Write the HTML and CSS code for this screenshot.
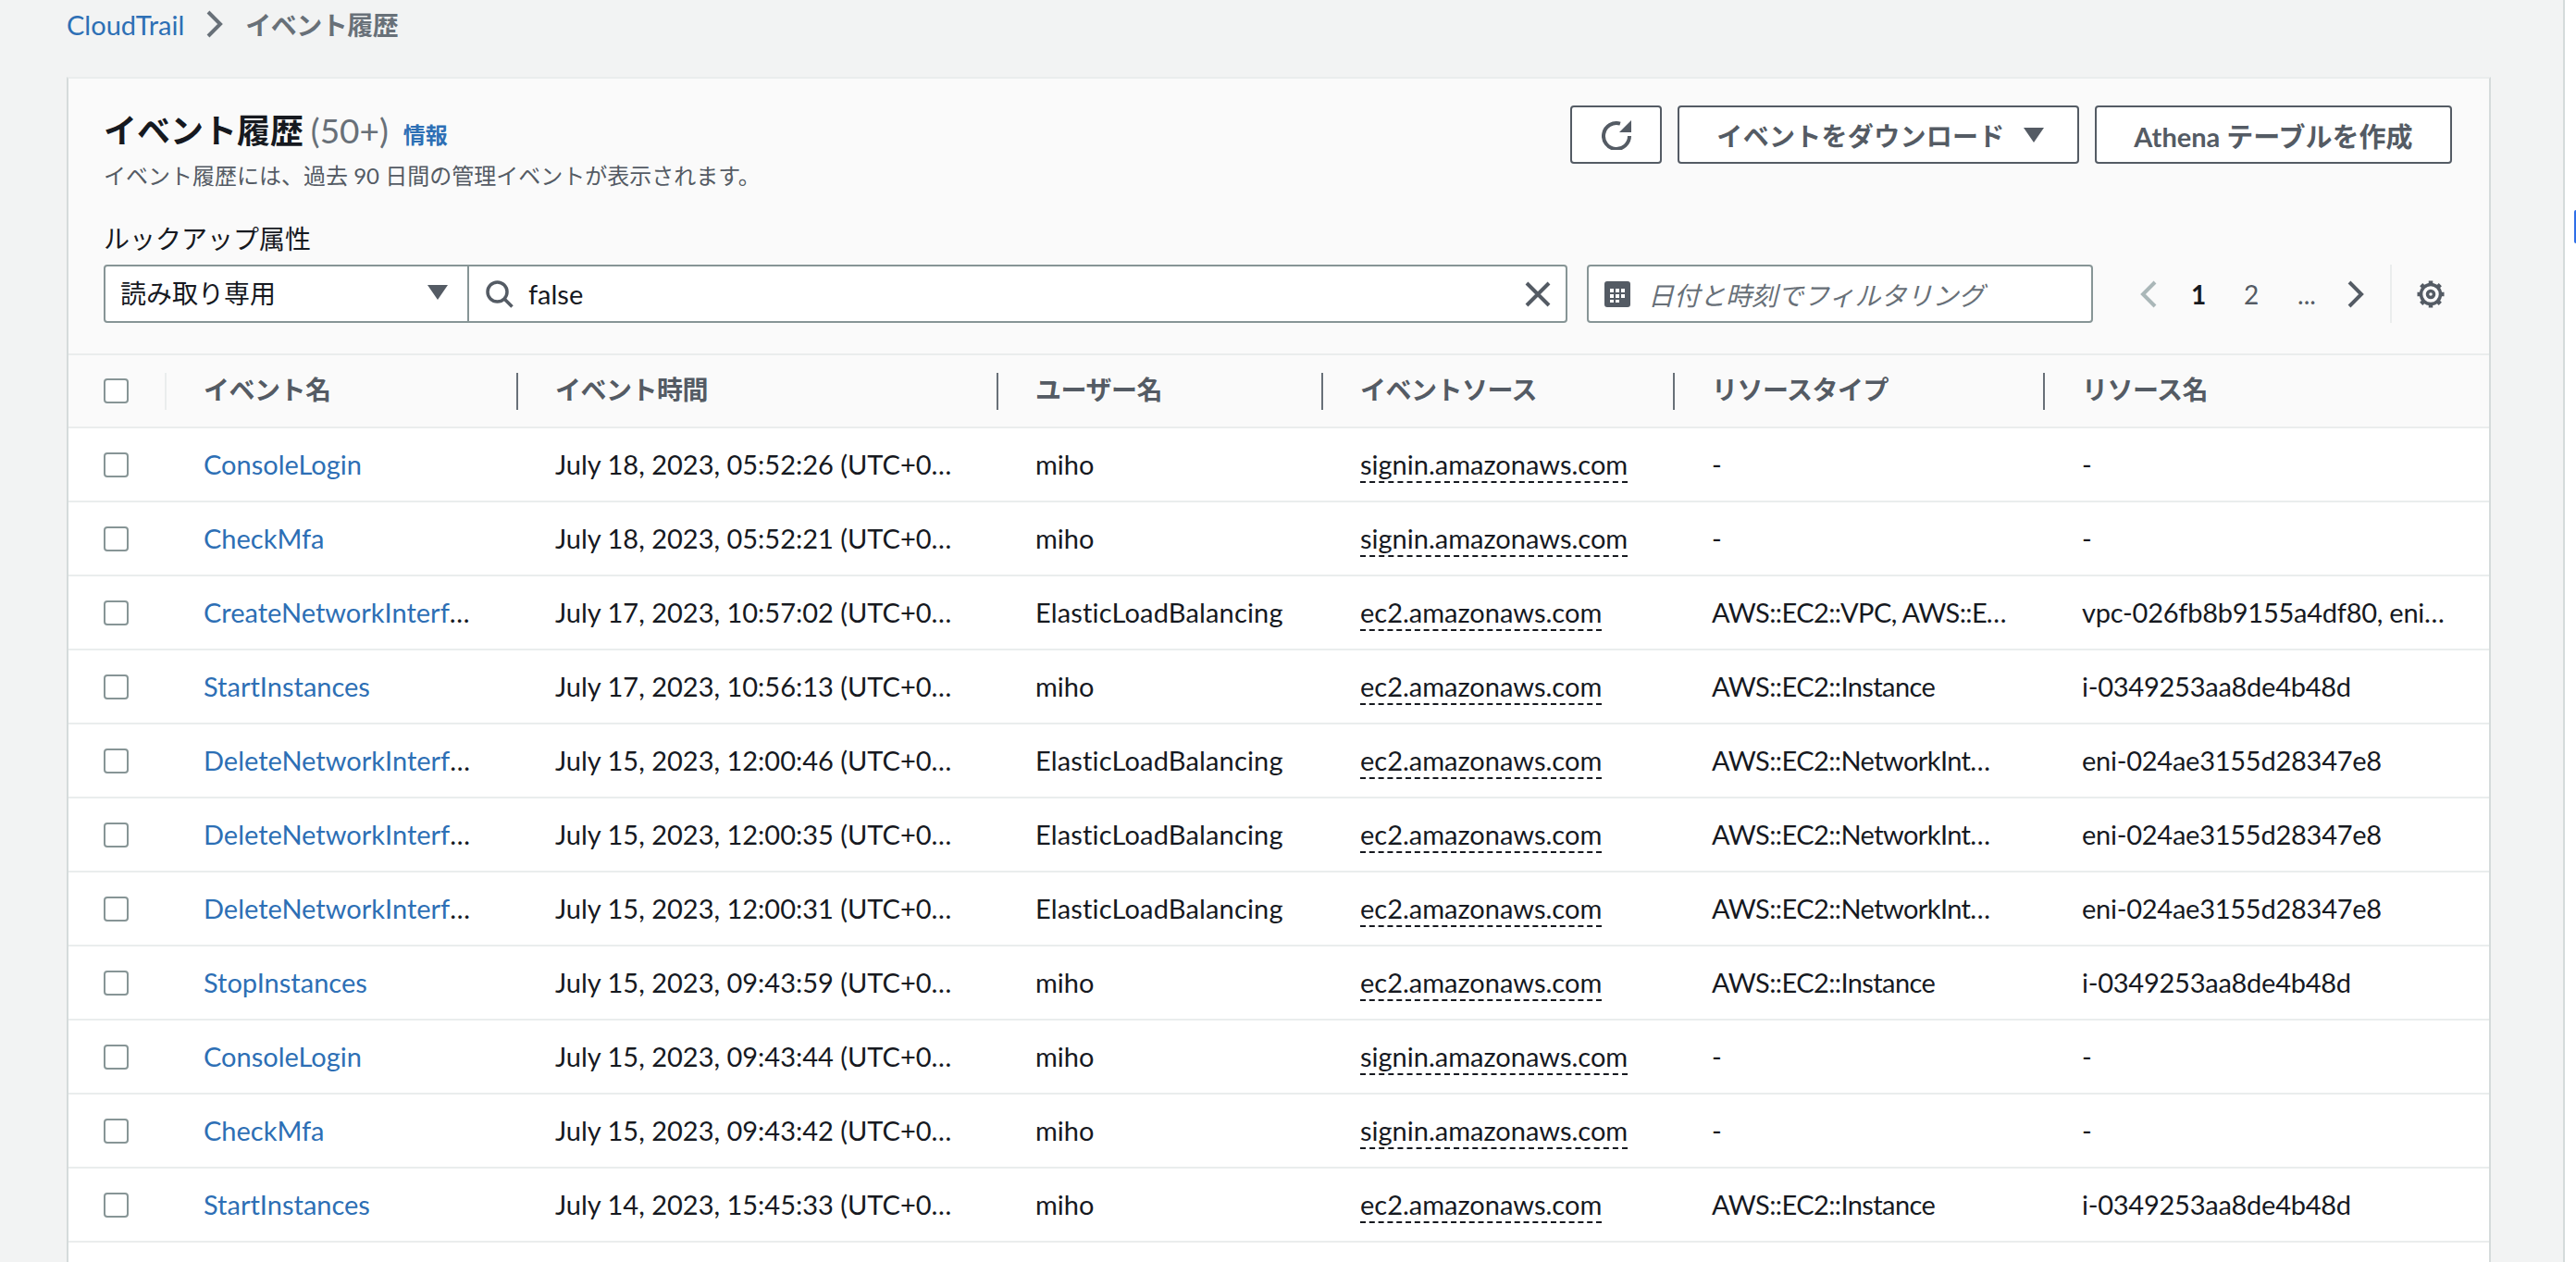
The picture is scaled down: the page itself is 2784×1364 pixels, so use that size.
FILE: index.html
```html
<!DOCTYPE html>
<html lang="ja">
<head>
  <meta charset="UTF-8" />
  <title>イベント履歴 | CloudTrail</title>
  <link rel="stylesheet" href="styles.css">
</head>
<body>

  <main class="content">
    <nav class="crumbs">
      <a href="#">CloudTrail</a>
      <svg class="crumb-sep" viewBox="0 0 18 30"><path d="M2 2l13 13L2 28"/></svg>
      <span class="crumb-here">イベント履歴</span>
    </nav>

    <section class="panel">
      <div class="panel-head">
        <div class="head-top">
          <div class="head-text">
            <h1>イベント履歴 <span class="count">(50+)</span> <a class="info" href="#">情報</a></h1>
            <p>イベント履歴には、過去 90 日間の管理イベントが表示されます。</p>
          </div>
          <div class="actions">
            <button class="btn btn-icon">
              <svg viewBox="0 0 32 32" class="icon-refresh"><path d="M20 3.600A14 14 0 1 0 30 17"/><path class="solid" d="M32 0v13H19z"/></svg>
            </button>
            <button class="btn btn-download">イベントをダウンロード
              <svg class="caret" viewBox="0 0 22 16"><path d="M0 0h22L11 16z"/></svg>
            </button>
            <button class="btn btn-athena">Athena テーブルを作成</button>
          </div>
        </div>

        <div class="field-label">ルックアップ属性</div>
        <div class="filters">
          <div class="lookup">
            <div class="lookup-select">読み取り専用
              <svg class="caret" viewBox="0 0 22 16"><path d="M0 0h22L11 16z"/></svg>
            </div>
            <div class="lookup-input">
              <svg class="icon-search" viewBox="0 0 30 30"><circle cx="12.5" cy="12.5" r="10.5"/><path d="M20 20l8.500 8.500"/></svg>
              <span class="lookup-value">false</span>
              <svg class="icon-clear" viewBox="0 0 28 28"><path d="M2 2l24 24M26 2L2 26"/></svg>
            </div>
          </div>
          <div class="date-filter">
            <svg class="icon-calendar" viewBox="0 0 28 28">
              <rect width="28" height="28" rx="3"/>
              <path class="cells" d="M6 8h4v4H6zM12 8h4v4h-4zM18 8h4v4h-4zM6 14h4v4H6zM12 14h4v4h-4zM18 14h4v4h-4zM6 20h4v3H6zM12 20h4v3h-4z"/>
            </svg>
            <span>日付と時刻でフィルタリング</span>
          </div>
          <div class="pager">
            <svg class="chev chev-off" viewBox="0 0 18 30"><path d="M16 2L3 15l13 13"/></svg>
            <span class="page page-on">1</span>
            <span class="page">2</span>
            <span class="page">...</span>
            <svg class="chev chev-next" viewBox="0 0 18 30"><path d="M2 2l13 13L2 28"/></svg>
            <span class="pager-sep"></span>
            <svg class="icon-gear" viewBox="0 0 32 32">
              <path class="gear-teeth" d="M16 1.500V6M16 26v4.500M1.500 16H6M26 16h4.500M5.700 5.700l3.200 3.200M23.100 23.100l3.200 3.200M5.700 26.300l3.200-3.200M23.100 8.900l3.200-3.200"/>
              <circle cx="16" cy="16" r="10.500"/>
              <circle cx="16" cy="16" r="3.500"/>
            </svg>
          </div>
        </div>
      </div>

      <table class="events">
        <colgroup>
          <col class="c-check"><col class="c-name"><col class="c-time"><col class="c-user"><col class="c-source"><col class="c-type"><col>
        </colgroup>
        <thead>
          <tr>
            <th><div class="th-in th-check"><span class="check"></span></div></th>
            <th><div class="th-in">イベント名</div></th>
            <th><div class="th-in">イベント時間</div></th>
            <th><div class="th-in">ユーザー名</div></th>
            <th><div class="th-in">イベントソース</div></th>
            <th><div class="th-in">リソースタイプ</div></th>
            <th><div class="th-in th-last">リソース名</div></th>
          </tr>
        </thead>
        <tbody>
          <tr>
            <td class="td-check"><span class="check"></span></td>
            <td><a href="#">ConsoleLogin</a></td>
            <td class="td-time">July 18, 2023, 05:52:26 (UTC+09:00)</td>
            <td>miho</td>
            <td><span class="src">signin.amazonaws.com</span></td>
            <td class="td-type">-</td>
            <td class="td-res">-</td>
          </tr>
          <tr>
            <td class="td-check"><span class="check"></span></td>
            <td><a href="#">CheckMfa</a></td>
            <td class="td-time">July 18, 2023, 05:52:21 (UTC+09:00)</td>
            <td>miho</td>
            <td><span class="src">signin.amazonaws.com</span></td>
            <td class="td-type">-</td>
            <td class="td-res">-</td>
          </tr>
          <tr>
            <td class="td-check"><span class="check"></span></td>
            <td class="td-name"><a href="#">CreateNetworkInterface</a></td>
            <td class="td-time">July 17, 2023, 10:57:02 (UTC+09:00)</td>
            <td class="td-user">ElasticLoadBalancing</td>
            <td><span class="src">ec2.amazonaws.com</span></td>
            <td class="td-type">AWS::EC2::VPC, AWS::EC2::Subnet</td>
            <td class="td-res">vpc-026fb8b9155a4df80, eni-024ae3155d28347e8</td>
          </tr>
          <tr>
            <td class="td-check"><span class="check"></span></td>
            <td><a href="#">StartInstances</a></td>
            <td class="td-time">July 17, 2023, 10:56:13 (UTC+09:00)</td>
            <td>miho</td>
            <td><span class="src">ec2.amazonaws.com</span></td>
            <td class="td-type">AWS::EC2::Instance</td>
            <td class="td-res">i-0349253aa8de4b48d</td>
          </tr>
          <tr>
            <td class="td-check"><span class="check"></span></td>
            <td class="td-name"><a href="#">DeleteNetworkInterface</a></td>
            <td class="td-time">July 15, 2023, 12:00:46 (UTC+09:00)</td>
            <td class="td-user">ElasticLoadBalancing</td>
            <td><span class="src">ec2.amazonaws.com</span></td>
            <td class="td-type td-type-eni">AWS::EC2::NetworkInterface</td>
            <td class="td-res">eni-024ae3155d28347e8</td>
          </tr>
          <tr>
            <td class="td-check"><span class="check"></span></td>
            <td class="td-name"><a href="#">DeleteNetworkInterface</a></td>
            <td class="td-time">July 15, 2023, 12:00:35 (UTC+09:00)</td>
            <td class="td-user">ElasticLoadBalancing</td>
            <td><span class="src">ec2.amazonaws.com</span></td>
            <td class="td-type td-type-eni">AWS::EC2::NetworkInterface</td>
            <td class="td-res">eni-024ae3155d28347e8</td>
          </tr>
          <tr>
            <td class="td-check"><span class="check"></span></td>
            <td class="td-name"><a href="#">DeleteNetworkInterface</a></td>
            <td class="td-time">July 15, 2023, 12:00:31 (UTC+09:00)</td>
            <td class="td-user">ElasticLoadBalancing</td>
            <td><span class="src">ec2.amazonaws.com</span></td>
            <td class="td-type td-type-eni">AWS::EC2::NetworkInterface</td>
            <td class="td-res">eni-024ae3155d28347e8</td>
          </tr>
          <tr>
            <td class="td-check"><span class="check"></span></td>
            <td><a href="#">StopInstances</a></td>
            <td class="td-time">July 15, 2023, 09:43:59 (UTC+09:00)</td>
            <td>miho</td>
            <td><span class="src">ec2.amazonaws.com</span></td>
            <td class="td-type">AWS::EC2::Instance</td>
            <td class="td-res">i-0349253aa8de4b48d</td>
          </tr>
          <tr>
            <td class="td-check"><span class="check"></span></td>
            <td><a href="#">ConsoleLogin</a></td>
            <td class="td-time">July 15, 2023, 09:43:44 (UTC+09:00)</td>
            <td>miho</td>
            <td><span class="src">signin.amazonaws.com</span></td>
            <td class="td-type">-</td>
            <td class="td-res">-</td>
          </tr>
          <tr>
            <td class="td-check"><span class="check"></span></td>
            <td><a href="#">CheckMfa</a></td>
            <td class="td-time">July 15, 2023, 09:43:42 (UTC+09:00)</td>
            <td>miho</td>
            <td><span class="src">signin.amazonaws.com</span></td>
            <td class="td-type">-</td>
            <td class="td-res">-</td>
          </tr>
          <tr>
            <td class="td-check"><span class="check"></span></td>
            <td><a href="#">StartInstances</a></td>
            <td class="td-time">July 14, 2023, 15:45:33 (UTC+09:00)</td>
            <td>miho</td>
            <td><span class="src">ec2.amazonaws.com</span></td>
            <td class="td-type">AWS::EC2::Instance</td>
            <td class="td-res">i-0349253aa8de4b48d</td>
          </tr>
        </tbody>
      </table>
    </section>
  </main>

  <div class="rail"><span class="rail-tab"></span></div>

</body>
</html>
```

FILE: styles.css
```css
html, body {
  height: 100%;
}

body {
  margin: 0;
  display: flex;
  overflow: hidden;
  background: white;
  color: #16191f;
  font-family: Lato, "Noto Sans CJK JP", sans-serif;
  font-size: 28px;
}

a {
  color: #2d6fb5;
  text-decoration: none;
}

svg {
  flex: none;
  fill: none;
}

/* Page area */
.content {
  width: 2772px;
  flex: none;
  display: flex;
  flex-direction: column;
  box-sizing: border-box;
  padding: 0 78px 0 72px;
  background: #f2f3f3;
  border-right: 2px solid #d5dbdb;
}

.rail {
  flex: 1;
  position: relative;
}

.rail-tab {
  position: absolute;
  top: 227px;
  right: 0;
  width: 2px;
  height: 36px;
  background: #2f6fe8;
  border-radius: 2px 0 0 2px;
}

/* Breadcrumbs */
.crumbs {
  height: 83px;
  padding-bottom: 31px;
  box-sizing: border-box;
  display: flex;
  align-items: center;
}

.crumbs a {
  font-size: 29px;
}

.crumb-sep {
  width: 18px;
  height: 30px;
  margin: 0 24px;
}

.crumb-sep path {
  stroke: #687078;
  stroke-width: 4;
}

.crumb-here {
  color: #687078;
  font-weight: 700;
  letter-spacing: -0.5px;
}

/* Panel */
.panel {
  flex: 1;
  background: white;
  border: 2px solid #d5dbdb;
  border-top-color: #eaeded;
  border-bottom: none;
}

.panel-head {
  background: #fafafa;
  padding: 29px 40px 33px 38px;
  border-bottom: 2px solid #eaeded;
}

.head-top {
  display: flex;
  justify-content: space-between;
  align-items: flex-start;
  height: 124px;
}

h1 {
  margin: 0;
  font-size: 36px;
  line-height: 53px;
  font-weight: 700;
}

.count {
  margin-left: -1px;
  color: #687078;
  font-size: 37px;
  font-weight: 400;
}

.info {
  font-size: 24px;
  font-weight: 700;
  margin-left: 7px;
}

.head-text p {
  margin: 0;
  color: #545b64;
  font-size: 24px;
  line-height: 36px;
}

.actions {
  display: flex;
  gap: 17px;
}

.btn {
  height: 63px;
  box-sizing: border-box;
  display: flex;
  align-items: center;
  justify-content: center;
  gap: 22px;
  padding: 0;
  background: white;
  border: 2px solid #545b64;
  border-radius: 4px;
  color: #545b64;
  font: inherit;
  font-weight: 700;
}

.btn-icon {
  width: 99px;
}

.btn-download {
  width: 434px;
  gap: 20px;
  padding-left: 4px;
  letter-spacing: 0.3px;
}

.btn-athena {
  width: 386px;
  font-size: 29px;
}

.icon-refresh {
  width: 32px;
  height: 32px;
}

.icon-refresh path {
  stroke: #545b64;
  stroke-width: 4;
}

.icon-refresh .solid {
  fill: #545b64;
  stroke: none;
}

.caret {
  width: 22px;
  height: 16px;
}

.caret path {
  fill: #545b64;
}

/* Filters */
.field-label {
  line-height: 40px;
  margin-bottom: 8px;
}

.filters {
  display: flex;
  align-items: stretch;
}

.lookup {
  flex: 1;
  display: flex;
  height: 63px;
  box-sizing: border-box;
  background: white;
  border: 2px solid #879596;
  border-radius: 4px;
}

.lookup-select {
  width: 393px;
  box-sizing: border-box;
  display: flex;
  align-items: center;
  justify-content: space-between;
  padding: 0 21px 3px 16px;
  border-right: 2px solid #879596;
}

.lookup-input {
  flex: 1;
  display: flex;
  align-items: center;
  padding: 0 16px 0 18px;
}

.lookup-value {
  flex: 1;
  margin-left: 16px;
  font-size: 29px;
}

.icon-search {
  width: 30px;
  height: 30px;
}

.icon-search circle,
.icon-search path {
  stroke: #545b64;
  stroke-width: 3.500;
}

.icon-clear {
  width: 28px;
  height: 28px;
}

.icon-clear path {
  stroke: #545b64;
  stroke-width: 4;
}

.date-filter {
  width: 547px;
  margin-left: 21px;
  box-sizing: border-box;
  display: flex;
  align-items: center;
  gap: 19px;
  padding-left: 17px;
  background: white;
  border: 2px solid #879596;
  border-radius: 4px;
  color: #687078;
  font-style: italic;
}

.icon-calendar {
  width: 28px;
  height: 28px;
}

.icon-calendar rect {
  fill: #545b64;
}

.icon-calendar .cells {
  fill: white;
}

/* Pagination */
.pager {
  display: flex;
  align-items: center;
  margin: 0 7px 0 51px;
}

.chev {
  width: 18px;
  height: 30px;
}

.chev path {
  stroke: #545b64;
  stroke-width: 4;
}

.chev-off {
  margin-right: 12px;
}

.chev-off path {
  stroke: #aab7b8;
}

.chev-next {
  margin-left: 14px;
}

.page {
  width: 60px;
  text-align: center;
  color: #545b64;
}

.page-on {
  color: #16191f;
  font-weight: 700;
  text-indent: 6px;
}

.pager-sep {
  width: 2px;
  height: 63px;
  margin: 0 26px 0 28px;
  background: #eaeded;
}

.icon-gear {
  width: 32px;
  height: 32px;
}

.icon-gear circle {
  stroke: #545b64;
  stroke-width: 3.500;
}

.icon-gear .gear-teeth {
  stroke: #545b64;
  stroke-width: 4.500;
}

/* Table */
.events {
  width: 100%;
  table-layout: fixed;
  border-collapse: separate;
  border-spacing: 0;
}

.c-check { width: 106px; }
.c-name { width: 380px; }
.c-time { width: 519px; }
.c-user { width: 351px; }
.c-source { width: 380px; }
.c-type { width: 400px; }

th {
  height: 77px;
  padding: 0;
  background: #fafafa;
  border-bottom: 2px solid #eaeded;
  color: #545b64;
  font-weight: 700;
  text-align: left;
  letter-spacing: -0.5px;
}

.th-in {
  height: 40px;
  box-sizing: border-box;
  display: flex;
  align-items: center;
  padding: 0 0 5px 40px;
  border-right: 2px solid #687078;
}

.th-check {
  padding: 0 0 0 38px;
  border-right-color: #eaeded;
}

.th-last {
  border-right: none;
}

td {
  height: 76px;
  padding: 0 40px 2px;
  border-bottom: 2px solid #eaeded;
  font-size: 29px;
  overflow: hidden;
  white-space: nowrap;
  text-overflow: ellipsis;
}

.td-check {
  height: 78px;
  padding: 0 0 0 38px;
}

.td-name {
  padding-right: 48px;
}

.td-time {
  padding-right: 50px;
}

.td-user {
  letter-spacing: 0.15px;
}

.td-type {
  padding-right: 38px;
  letter-spacing: -0.6px;
}

.td-type-eni {
  padding-right: 48px;
}

.td-res {
  letter-spacing: -0.25px;
}

.check {
  display: block;
  width: 27px;
  height: 27px;
  box-sizing: border-box;
  background: white;
  border: 2px solid #879596;
  border-radius: 4px;
}

.src {
  padding-bottom: 1px;
  border-bottom: 2px dashed #16191f;
}
```
